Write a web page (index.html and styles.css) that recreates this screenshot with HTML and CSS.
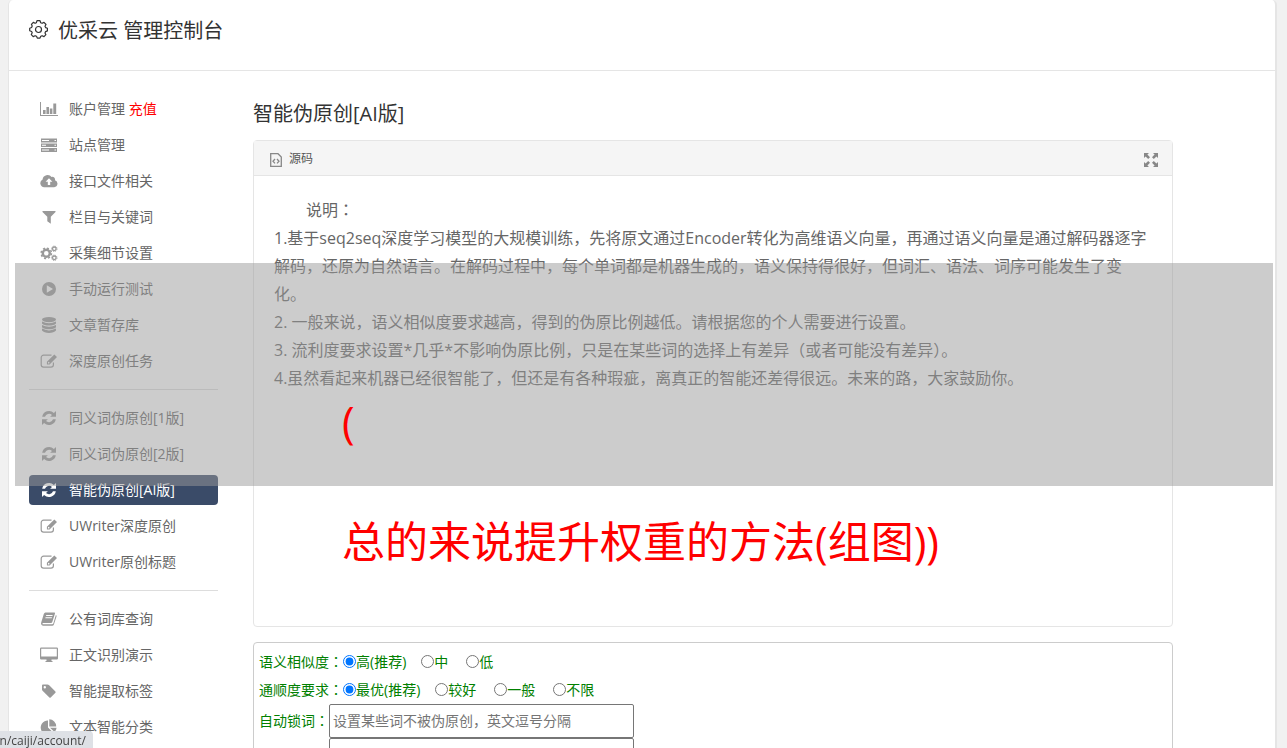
FILE: index.html
```html
<!DOCTYPE html>
<html lang="zh-CN">
<head>
    <meta charset="UTF-8">
    <meta name="viewport" content="width=device-width, initial-scale=1.0">
    <title>优采云 管理控制台</title>
    <link rel="stylesheet" href="styles.css">
</head>
<body>
    <svg class="sprite" aria-hidden="true">
        <symbol id="refresh" viewBox="0 0 18 18">
            <path d="M2.2 7.8A7 7 0 0 1 13.9 3.9L16 1.9V7.8H10.1L12 5.9A4.3 4.3 0 0 0 5 7.8ZM15.8 10.2A7 7 0 0 1 4.1 14.1L2 16.1V10.2H7.9L6 12.1A4.3 4.3 0 0 0 13 10.2Z"/>
        </symbol>
        <symbol id="edit" viewBox="0 0 18 18">
            <path d="M11.5 3.2H3.6A2.4 2.4 0 0 0 1.2 5.6V12.8A2.4 2.4 0 0 0 3.6 15.2H11A2.4 2.4 0 0 0 13.4 12.8V10.6" fill="none" stroke="currentColor" stroke-width="1.2"/>
            <path d="M14.3 2.4L17 5.1L9.6 12.5H6.9V9.8ZM8 10.3V11.4H9.1L9.7 10.8L8.6 9.7Z" fill-rule="evenodd"/>
        </symbol>
    </svg>

    <div class="page">
        <header class="page-header">
            <svg class="gear" viewBox="0 0 19 19">
                <path d="M8 .7H11L11.7 2.7L13.1 3.3L15 2.4L17 4.5L16 6.3L16.6 7.6L18.4 8.3V10.9L16.6 11.6L16 12.9L16.9 14.7L15 16.6L13.1 15.7L11.8 16.3L11 18.1H8.3L7.5 16.3L6.1 15.7L4.2 16.6L2.3 14.6L3.2 12.8L2.6 11.5L.7 10.7V8.2L2.6 7.5L3.2 6.1L2.4 4.3L4.3 2.4L6.1 3.3L7.4 2.7Z" stroke-linejoin="round"/>
                <circle cx="9.5" cy="9.5" r="3"/>
            </svg>
            <h1>优采云 管理控制台</h1>
        </header>

        <div class="layout">
            <nav class="sidebar">
                <ul>
                    <li><a href="#"><svg viewBox="0 0 18 18"><path d="M0 2H1V15H18V16H0ZM3 10H5.6V14H3ZM6.4 7H9V14H6.4ZM9.8 8.5H12.4V14H9.8ZM13.3 3.5H16.2V14H13.3Z"/></svg>账户管理 <span class="recharge">充值</span></a></li>
                    <li><a href="#"><svg viewBox="0 0 18 18"><path d="M1 2.5H17V6.5H1ZM2 4V5H9V4ZM14.5 4V5H16V4ZM1 7.5H17V11H1ZM2 8.8V9.8H6V8.8ZM14.5 8.8V9.8H16V8.8ZM1 12H17V16H1ZM2 13.5V14.5H9V13.5ZM14.5 13.5V14.5H16V13.5Z" fill-rule="evenodd"/></svg>站点管理</a></li>
                    <li><a href="#"><svg viewBox="0 0 18 18"><path d="M4.2 15.2A4 4 0 0 1 2.6 7.6A5 5 0 0 1 11.6 5A2.7 2.7 0 0 1 15 8.2A3.6 3.6 0 0 1 14.2 15.2ZM9 6.2L5.6 9.7H7.8V13H10.2V9.7H12.4Z" fill-rule="evenodd"/></svg>接口文件相关</a></li>
                    <li><a href="#"><svg viewBox="0 0 18 18"><path d="M2.5 3H15.5V4L10.8 8.8V15.8L7.3 13.3V8.8L2.5 4Z"/></svg>栏目与关键词</a></li>
                    <li><a href="#"><svg viewBox="0 0 18 18"><circle cx="6.3" cy="9.3" r="3.5" fill="none" stroke="currentColor" stroke-width="2.4"/><circle cx="6.3" cy="9.3" r="5.2" fill="none" stroke="currentColor" stroke-width="1.4" stroke-dasharray="2.1 1.98"/><circle cx="14.3" cy="4.8" r="1.8" fill="none" stroke="currentColor" stroke-width="1.3"/><circle cx="14.3" cy="4.8" r="2.7" fill="none" stroke="currentColor" stroke-dasharray="1.1 1.02"/><circle cx="14.3" cy="13.8" r="1.8" fill="none" stroke="currentColor" stroke-width="1.3"/><circle cx="14.3" cy="13.8" r="2.7" fill="none" stroke="currentColor" stroke-dasharray="1.1 1.02"/></svg>采集细节设置</a></li>
                    <li><a href="#"><svg viewBox="0 0 18 18"><path d="M9 2A7 7 0 1 1 9 16A7 7 0 0 1 9 2ZM6.8 5.3V12.7L13 9Z" fill-rule="evenodd"/></svg>手动运行测试</a></li>
                    <li><a href="#"><svg viewBox="0 0 18 18"><ellipse cx="9" cy="3.6" rx="7" ry="2.6"/><path d="M2 5.4Q9 9 16 5.4V7.6Q14 9.6 9 9.6Q4 9.6 2 7.6ZM2 9Q9 12.6 16 9V11.2Q14 13.2 9 13.2Q4 13.2 2 11.2ZM2 12.6Q9 16.2 16 12.6V14.6Q14 17 9 17Q4 17 2 14.6Z"/></svg>文章暂存库</a></li>
                    <li><a href="#"><svg><use href="#edit"/></svg>深度原创任务</a></li>
                </ul>
                <hr>
                <ul>
                    <li><a href="#"><svg><use href="#refresh"/></svg>同义词伪原创[1版]</a></li>
                    <li><a href="#"><svg><use href="#refresh"/></svg>同义词伪原创[2版]</a></li>
                    <li><a href="#" class="active"><svg><use href="#refresh"/></svg>智能伪原创[AI版]</a></li>
                    <li><a href="#"><svg><use href="#edit"/></svg>UWriter深度原创</a></li>
                    <li><a href="#"><svg><use href="#edit"/></svg>UWriter原创标题</a></li>
                </ul>
                <hr>
                <ul>
                    <li><a href="#"><svg viewBox="0 0 18 18"><path d="M5.4 2.5H14.3Q15.3 2.5 15 3.5L12.2 12.2Q11.9 13 11 13H3Q2.2 13.2 2.5 14.2H12.2Q13 14.2 13.3 13.4L15.9 5Q16.8 5.4 16.5 6.4L13.9 14.4Q13.5 15.7 12.1 15.7H3Q.5 15.2 1.2 12.6L3.8 4Q4.3 2.5 5.4 2.5ZM6.3 5L6 5.9H12.4L12.7 5ZM5.6 7.3L5.3 8.2H11.7L12 7.3Z" fill-rule="evenodd"/></svg>公有词库查询</a></li>
                    <li><a href="#"><svg viewBox="0 0 18 18"><path d="M1.2 1.5H16.8Q18 1.5 18 2.7V12.3Q18 13.5 16.8 13.5H11.5V15H12.5V16H5.5V15H6.5V13.5H1.2Q0 13.5 0 12.3V2.7Q0 1.5 1.2 1.5ZM1.2 2.7V10.5H16.8V2.7Z" fill-rule="evenodd"/></svg>正文识别演示</a></li>
                    <li><a href="#"><svg viewBox="0 0 18 18"><path d="M2 3.4Q2 2.4 3 2.4H7.4Q8.4 2.4 9.2 3.2L15.4 9.4Q16 10 15.4 10.7L10.7 15.4Q10 16 9.4 15.4L2.8 9Q2 8.2 2 7.4ZM4.8 4A1.2 1.2 0 1 0 4.8 6.4A1.2 1.2 0 1 0 4.8 4Z" fill-rule="evenodd"/></svg>智能提取标签</a></li>
                    <li><a href="#"><svg viewBox="0 0 18 18"><path d="M8 2.5V9.5L12.8 14.3A7 7 0 1 1 8 2.5ZM9.3 1.3A7 7 0 0 1 16.2 8.4H9.3ZM10 9.7H16.6A7 7 0 0 1 14.5 14.1Z"/></svg>文本智能分类</a></li>
                </ul>
            </nav>

            <main class="content">
                <h2>智能伪原创[AI版]</h2>

                <section class="card">
                    <div class="card-header">
                        <svg class="file-icon" viewBox="0 0 12 14">
                            <path d="M.7 .7H8L11.3 4V13.3H.7Z"/>
                            <path d="M5 6L3 8.2L5 10.4M7 6L9 8.2L7 10.4"/>
                        </svg>
                        <span>源码</span>
                        <button type="button" class="expand" aria-label="全屏">
                            <svg viewBox="0 0 14 14"><path d="M0 0H5L3.4 1.6L6 4.2L4.2 6L1.6 3.4L0 5ZM14 0V5L12.4 3.4L9.8 6L8 4.2L10.6 1.6L9 0ZM0 14V9L1.6 10.6L4.2 8L6 9.8L3.4 12.4L5 14ZM14 14H9L10.6 12.4L8 9.8L9.8 8L12.4 10.6L14 9Z"/></svg>
                        </button>
                    </div>
                    <div class="card-body">
                        <p class="lead">说明<span class="colon" lang="zh-TW">：</span></p>
                        <p>1.基于seq2seq深度学习模型的大规模训练，先将原文通过Encoder转化为高维语义向量，再通过语义向量是通过解码器逐字解码，还原为自然语言。在解码过程中，每个单词都是机器生成的，语义保持得很好，但词汇、语法、词序可能发生了变化。</p>
                        <p>2. 一般来说，语义相似度要求越高，得到的伪原比例越低。请根据您的个人需要进行设置。</p>
                        <p>3. 流利度要求设置*几乎*不影响伪原比例，只是在某些词的选择上有差异（或者可能没有差异）。</p>
                        <p>4.虽然看起来机器已经很智能了，但还是有各种瑕疵，离真正的智能还差得很远。未来的路，大家鼓励你。</p>
                    </div>
                </section>

                <form class="options">
                    <div class="row" role="radiogroup" aria-label="语义相似度">
                        <span>语义相似度<span class="colon" lang="zh-TW">：</span></span>
                        <label><input type="radio" name="similar" checked>高(推荐)</label>
                        <label><input type="radio" name="similar">中</label>
                        <label><input type="radio" name="similar">低</label>
                    </div>
                    <div class="row" role="radiogroup" aria-label="通顺度要求">
                        <span>通顺度要求<span class="colon" lang="zh-TW">：</span></span>
                        <label><input type="radio" name="fluent" checked>最优(推荐)</label>
                        <label><input type="radio" name="fluent">较好</label>
                        <label><input type="radio" name="fluent">一般</label>
                        <label><input type="radio" name="fluent">不限</label>
                    </div>
                    <div class="lock-row">
                        <label for="lock">自动锁词<span class="colon" lang="zh-TW">：</span></label>
                        <div class="fields">
                            <input type="text" id="lock" placeholder="设置某些词不被伪原创，英文逗号分隔">
                            <input type="text" aria-label="自动锁词">
                        </div>
                    </div>
                </form>
            </main>
        </div>
    </div>

    <div class="banner">
        <p>(<br>总的来说提升权重的方法(组图))</p>
    </div>
    <div class="status-bar"><span>n/caiji/account/</span></div>
</body>
</html>
```
FILE: styles.css
```css
* {
    box-sizing: border-box;
}

body {
    font-family: "Open Sans", "Noto Sans CJK SC", sans-serif;
    font-size: 14px;
    margin: 0;
    padding: 0 10px 0 8px;
    height: 100vh;
    overflow: hidden;
    background: #f1f1f1;
    color: #666;
}

h1, h2, p, ul {
    margin: 0;
    padding: 0;
    font-weight: normal;
}

svg {
    fill: currentColor;
    flex: none;
}

.sprite {
    display: none;
}

.colon {
    font-family: "Noto Sans CJK TC", sans-serif;
}

.page {
    min-height: 100vh;
    background: #fff;
    border: solid #e5e5e5;
    border-width: 0 2px 0 1px;
    border-radius: 5px 5px 0 0;
}

.page-header {
    display: flex;
    align-items: flex-start;
    gap: 10px;
    height: 71px;
    padding: 16px 20px 0;
    border-bottom: 1px solid #e5e5e5;
    color: #333;
}

.page-header h1 {
    font-size: 20px;
    line-height: 30px;
}

.gear {
    width: 19px;
    height: 19px;
    margin-top: 4px;
    fill: none;
    stroke: #333;
    stroke-width: 1.2;
}

.layout {
    display: flex;
    gap: 35px;
    padding: 23px 102px 0 20px;
}

/* sidebar */
.sidebar {
    width: 189px;
    flex: none;
}

.sidebar ul {
    display: flex;
    flex-direction: column;
    gap: 6px;
    list-style: none;
}

.sidebar a {
    display: flex;
    align-items: center;
    height: 30px;
    padding: 0 0 2px 11px;
    border-radius: 4px;
    color: #666;
    text-decoration: none;
    white-space: pre;
}

.sidebar svg {
    width: 18px;
    height: 18px;
    margin: 2px 11px 0 0;
    color: #999;
}

.sidebar a.active {
    background: #3a4b68;
    color: #fff;
}

.sidebar a.active svg {
    color: #fff;
}

.sidebar hr {
    height: 1px;
    margin: 13px 0;
    border: none;
    background: #ddd;
}

.recharge {
    color: #f00;
}

/* main column */
.content {
    flex: 1;
    min-width: 0;
}

.content h2 {
    margin-bottom: 6px;
    color: #333;
    font-size: 20px;
    line-height: 40px;
}

.card {
    border: 1px solid #e5e5e5;
    border-radius: 4px;
}

.card-header {
    display: flex;
    align-items: center;
    gap: 7px;
    height: 35px;
    padding: 0 14px 0 16px;
    background: #f5f5f5;
    border-bottom: 1px solid #e5e5e5;
    color: #555;
    font-size: 12px;
}

.file-icon {
    width: 12px;
    height: 14px;
    margin-top: 4px;
    fill: none;
    stroke: #888;
    stroke-width: 1.3;
}

.expand {
    display: flex;
    margin: 4px 0 0 auto;
    padding: 0;
    border: none;
    background: none;
    color: #888;
}

.expand svg {
    width: 14px;
    height: 14px;
}

.card-body {
    min-height: 450px;
    padding: 19px 20px;
    font-size: 16px;
    line-height: 28px;
}

.lead {
    text-indent: 2em;
}

/* options */
.options {
    margin-top: 15px;
    padding: 5px;
    border: 1px solid #ccc;
    border-radius: 4px;
    color: #008000;
}

.row {
    display: flex;
    align-items: center;
    height: 28px;
    padding-bottom: 2px;
}

.row label {
    display: flex;
    align-items: center;
    margin-right: 18px;
}

.row label:first-of-type {
    margin-right: 15px;
}

.row input {
    width: 13px;
    height: 13px;
    margin: 0;
}

.lock-row {
    display: flex;
}

.lock-row > label {
    line-height: 32px;
}

.fields {
    display: flex;
    flex-direction: column;
}

.fields input {
    width: 305px;
    height: 34px;
    padding: 0 3px 2px;
    border: 1px solid #767676;
    border-radius: 2px;
    font: inherit;
}

.fields input::placeholder {
    color: #757575;
}

/* caption band over the page */
.banner {
    position: absolute;
    top: 263px;
    left: 15px;
    right: 14px;
    height: 223px;
    padding: 99px 0 0 327px;
    background: rgba(153, 153, 153, 0.5);
    pointer-events: none;
}

.banner p {
    color: #f00;
    font-size: 43px;
    line-height: 120px;
    white-space: nowrap;
}

.status-bar {
    position: fixed;
    left: 0;
    bottom: 0;
    width: 93px;
    height: 17px;
    padding-right: 7px;
    display: flex;
    justify-content: flex-end;
    overflow: hidden;
    background: #dee1e6;
    border-top-right-radius: 4px;
    color: #444;
    font-size: 12px;
    line-height: 20px;
}
```
